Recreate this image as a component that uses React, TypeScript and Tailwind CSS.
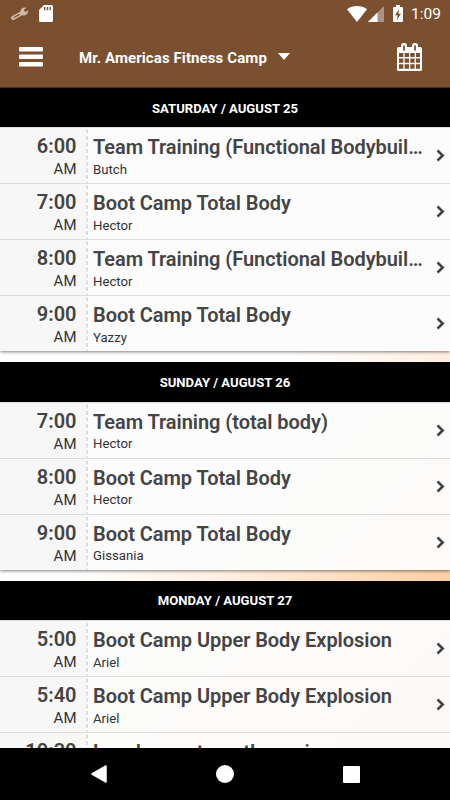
interface ClassItem {
  time: string
  title: string
  coach: string
}

interface Day {
  label: string
  classes: ClassItem[]
}

const days: Day[] = [
  {
    label: "SATURDAY / AUGUST 25",
    classes: [
      { time: "6:00", title: "Team Training (Functional Bodybuilding)", coach: "Butch" },
      { time: "7:00", title: "Boot Camp Total Body", coach: "Hector" },
      { time: "8:00", title: "Team Training (Functional Bodybuilding)", coach: "Hector" },
      { time: "9:00", title: "Boot Camp Total Body", coach: "Yazzy" },
    ],
  },
  {
    label: "SUNDAY / AUGUST 26",
    classes: [
      { time: "7:00", title: "Team Training (total body)", coach: "Hector" },
      { time: "8:00", title: "Boot Camp Total Body", coach: "Hector" },
      { time: "9:00", title: "Boot Camp Total Body", coach: "Gissania" },
    ],
  },
  {
    label: "MONDAY / AUGUST 27",
    classes: [
      { time: "5:00", title: "Boot Camp Upper Body Explosion", coach: "Ariel" },
      { time: "5:40", title: "Boot Camp Upper Body Explosion", coach: "Ariel" },
      { time: "10:30", title: "Lunch run strength moving", coach: "Ariel" },
    ],
  },
]

function StatusBar() {
  return (
    <div className="flex h-[27px] items-center justify-between pl-[11px] pr-[9px]">
      <div className="flex items-center gap-[10px]">
        <svg className="h-[14px] w-[18px]" viewBox="0 0 18 14">
          <path d="M2.2 10.8 10.2 6.5" stroke="#ceb9a8" strokeWidth="4.2" strokeLinecap="round" />
          <path d="M9.2 5.2C9.1 2 12.2-.2 15 .8L12.8 3.2 14.2 5 17 3.6C17.5 7 13.8 9.4 10.8 8Z" fill="#ceb9a8" />
          <path d="M2.8 10.5 8.6 7.4" stroke="#7b5030" strokeWidth="1.2" />
        </svg>
        <svg className="h-[17px] w-[14px]" viewBox="0 0 14 17">
          <path d="M5 0h7.5A1.5 1.5 0 0 1 14 1.5v14a1.5 1.5 0 0 1-1.5 1.5h-11A1.5 1.5 0 0 1 0 15.500V5Z" fill="#fff" />
          <path d="M5.700 2v3.200M8.500 2v3.200M11.200 2v3.200" stroke="#7b5030" strokeWidth="1.4" />
        </svg>
      </div>
      <div className="flex items-center">
        <svg className="h-4 w-5" viewBox="0 0 20 16">
          <path d="M0 3.300C5.500-1.100 14.500-1.100 20 3.300L10 16Z" fill="#fff" />
        </svg>
        <svg className="ml-px h-4 w-4" viewBox="0 0 16 16">
          <path d="M16 0v16H0Z" fill="#ad9482" />
          <path d="M9.500 6.500V16H0Z" fill="#fff" />
        </svg>
        <svg className="ml-[9px] h-[17px] w-[10px]" viewBox="0 0 10 17">
          <path d="M3 0h4v2h2a1 1 0 0 1 1 1v13a1 1 0 0 1-1 1H1a1 1 0 0 1-1-1V3a1 1 0 0 1 1-1h2Z" fill="#fff" />
          <path d="M6.200 4 2 10.200h2.600L3.800 15 8 8.700H5.300Z" fill="#7b5030" />
        </svg>
        <span className="ml-2 text-[15.5px] leading-[18px] text-white">1:09</span>
      </div>
    </div>
  )
}

function CalendarIcon() {
  return (
    <svg className="h-7 w-[25px]" viewBox="0 0 25 28">
      <rect x="0" y="4" width="25" height="24" rx="1.500" fill="#fff" />
      <rect x="4" y="0" width="6" height="8.500" rx="2.500" fill="#fff" />
      <rect x="15" y="0" width="6" height="8.500" rx="2.500" fill="#fff" />
      <path d="M7 2.500v5M18 2.500v5" stroke="#7b5030" strokeWidth="1.800" />
      <path
        d="M2 10h4.300v4H2ZM7.600 10h4.400v4H7.600ZM13.300 10h4.300v4h-4.300ZM19 10h4v4h-4ZM2 15.500h4.300v4.200H2ZM7.600 15.500h4.400v4.200H7.600ZM13.300 15.500h4.300v4.200h-4.300ZM19 15.500h4v4.200h-4ZM2 21.300h4.300v4.500H2ZM7.600 21.300h4.400v4.500H7.600ZM13.300 21.300h4.300v4.500h-4.300ZM19 21.300h4v4.500h-4Z"
        fill="#7b5030"
      />
    </svg>
  )
}

function Header() {
  return (
    <header className="h-[88px] shrink-0 border-b border-[#4a2f1b] bg-[#7b5030]">
      <StatusBar />
      <div className="flex h-[60px] items-center pl-[19px] pr-[28px]">
        <button>
          <svg className="h-5 w-6" viewBox="0 0 24 20" fill="#fff">
            <rect x="0" y="0" width="24" height="4.500" rx="1" />
            <rect x="0" y="7.500" width="24" height="4.500" rx="1" />
            <rect x="0" y="15" width="24" height="4.500" rx="1" />
          </svg>
        </button>
        <button className="ml-9 flex items-center gap-[11px] pt-[2px] text-[15px] font-bold text-white">
          <span className="whitespace-nowrap tracking-[0.1px]">Mr. Americas Fitness Camp</span>
          <svg className="-mt-[3px] h-[7px] w-3" viewBox="0 0 12 7">
            <path d="M0 0h12L6 7Z" fill="#fff" />
          </svg>
        </button>
        <button className="ml-auto">
          <CalendarIcon />
        </button>
      </div>
    </header>
  )
}

function ClassRow({ item }: { item: ClassItem }) {
  return (
    <div className="flex h-14 border-t border-black/12">
      <div className="w-[86px] shrink-0 bg-black/2 pr-[9.5px] pt-[6px] text-right">
        <div className="text-[20px] font-semibold leading-6 text-[#444]">{item.time}</div>
        <div className="text-[15px] leading-[22px] text-[#333]">AM</div>
      </div>
      <svg className="h-[55px] w-[2px] shrink-0" viewBox="0 0 2 55">
        <path d="M1 1.500V55" stroke="#dddddd" strokeWidth="2" strokeDasharray="4 2.500" />
      </svg>
      <div className="w-[336px] shrink-0 pl-[5px] pt-[7px]">
        <div className="truncate text-[20px] font-semibold leading-6 tracking-[-0.05px] text-[#444]">{item.title}</div>
        <div className="pt-[0.5px] text-[13.2px] leading-5 text-[#333]">{item.coach}</div>
      </div>
      <svg className="ml-[12px] mt-[21px] h-[13px] w-[9px]" viewBox="0 0 9 13">
        <path d="M1.500 1.500 6.700 6.500 1.500 11.500" fill="none" stroke="#444" strokeWidth="2.600" />
      </svg>
    </div>
  )
}

function DaySection({ day }: { day: Day }) {
  return (
    <section className="shrink-0">
      <h2 className="flex h-[39.3px] items-center justify-center bg-black pt-[1.5px] text-[13.1px] font-bold text-white">{day.label}</h2>
      <div className="bg-[#fcfcfc]/97 shadow-[0_1px_3px_rgba(0,0,0,0.5)]">
        {day.classes.map((item) => (
          <ClassRow key={item.time} item={item} />
        ))}
      </div>
    </section>
  )
}

function NavBar() {
  return (
    <nav className="flex h-[52px] shrink-0 items-center bg-black pl-[91px]">
      <svg className="h-[18px] w-4" viewBox="0 0 16 18">
        <path d="M15 1v16L1 9Z" fill="#fff" stroke="#fff" strokeWidth="1.500" strokeLinejoin="round" />
      </svg>
      <span className="ml-[109px] h-[18px] w-[18px] rounded-full bg-white" />
      <span className="ml-[109px] h-[17px] w-[17px] rounded-[1px] bg-white" />
    </nav>
  )
}

export default function App() {
  return (
    <div className="flex h-[800px] w-[450px] flex-col overflow-hidden bg-white font-['Roboto',sans-serif]">
      <Header />
      <main className="flex min-h-0 flex-1 flex-col gap-[11.1px] overflow-hidden bg-[linear-gradient(135deg,#fff_50%,#ffeedf_65%,#fccfa0_85%,#f5b67c_100%)]">
        {days.map((day) => (
          <DaySection key={day.label} day={day} />
        ))}
      </main>
      <NavBar />
    </div>
  )
}
